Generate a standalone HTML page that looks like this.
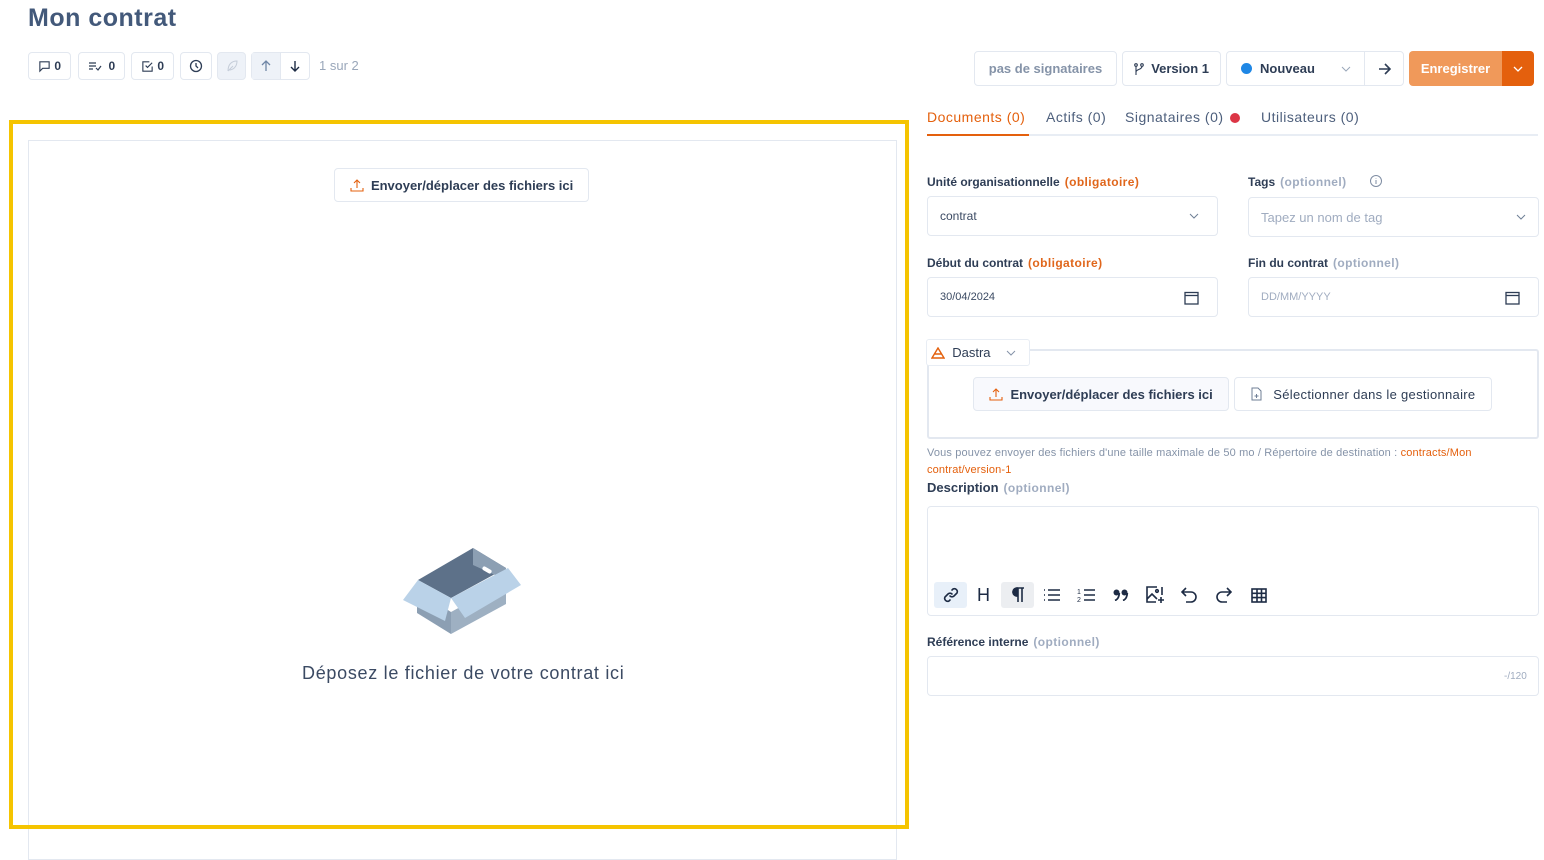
<!DOCTYPE html>
<html><head><meta charset="utf-8"><style>
*{box-sizing:border-box;margin:0;padding:0}
body{width:1544px;height:846px;background:#fff;font-family:"Liberation Sans",sans-serif;color:#3b4a63;position:relative;overflow:hidden}
.a{position:absolute}
.btn{position:absolute;border:1px solid #e3e8f0;border-radius:4px;background:#fff;display:flex;align-items:center;justify-content:center;font-size:12px;font-weight:bold;color:#2e3d55}
.lbl{position:absolute;font-size:12px;font-weight:bold;color:#2e3d55}
.lbl span{font-weight:bold;margin-left:5px;letter-spacing:.4px}
.req{color:#e0661b}.opt{color:#a0acc0}
.inp{position:absolute;border:1px solid #e3e8f0;border-radius:4px;background:#fff;font-size:12px;padding-left:12px;display:flex;align-items:center}
svg{display:block}
.tb{position:absolute;top:582px;width:33px;height:26px;display:flex;align-items:center;justify-content:center}
</style></head><body>
<div class="a" style="left:28px;top:4px;font-size:25px;font-weight:bold;color:#43597a;letter-spacing:.5px">Mon contrat</div>

<div class="btn" style="left:28px;top:52px;width:43px;height:28px"><svg width="13" height="13" viewBox="0 0 14 14" fill="none" stroke="#2e3d55" stroke-width="1.2"><path d="M2 2h10v7H5l-3 3z"/></svg>&nbsp;0</div>
<div class="btn" style="left:78px;top:52px;width:47px;height:28px"><svg width="14" height="12" viewBox="0 0 14 12" fill="none" stroke="#2e3d55" stroke-width="1.2"><path d="M1 3h7M1 6h7M1 9h4M8 8l2 2 3-4"/></svg>&nbsp;&nbsp;0</div>
<div class="btn" style="left:131px;top:52px;width:43px;height:28px"><svg width="13" height="13" viewBox="0 0 14 14" fill="none" stroke="#2e3d55" stroke-width="1.2"><path d="M12 7v5H2V2h7M5 6l2 2 5-5"/></svg>&nbsp;0</div>
<div class="btn" style="left:180px;top:52px;width:32px;height:28px"><svg width="14" height="14" viewBox="0 0 14 14" fill="none" stroke="#2e3d55" stroke-width="1.3"><circle cx="7" cy="7" r="5.5"/><path d="M7 4v3l2 2"/></svg></div>
<div class="btn" style="left:217px;top:52px;width:29px;height:28px;background:#eef2f8"><svg width="14" height="14" viewBox="0 0 14 14" fill="none" stroke="#c5cdd9" stroke-width="1"><path d="M3 12C3 6 6 2 12 2c0 6-4 9-8 9M3 12l5-5"/></svg></div>
<div class="btn" style="left:251px;top:52px;width:59px;height:28px;background:#fff;justify-content:flex-start"><div style="width:29px;height:26px;background:#eef2f8;display:flex;align-items:center;justify-content:center;border-right:1px solid #e3e8f0"><svg width="12" height="12" viewBox="0 0 12 12" fill="none" stroke="#6f86a6" stroke-width="1.3"><path d="M6 11V1M2 5l4-4 4 4"/></svg></div><div style="width:29px;display:flex;justify-content:center"><svg width="12" height="12" viewBox="0 0 12 12" fill="none" stroke="#1d2b44" stroke-width="1.4"><path d="M6 1v10M2 7l4 4 4-4"/></svg></div></div>
<div class="a" style="left:319px;top:58px;font-size:13px;color:#9aa7ba">1 sur 2</div>

<div class="btn" style="left:974px;top:51px;width:143px;height:35px;color:#8593a8;font-size:13px">pas de signataires</div>
<div class="btn" style="left:1122px;top:51px;width:99px;height:35px;font-size:13px"><svg width="10" height="12" viewBox="0 0 10 12" fill="none" stroke="#2e3d55" stroke-width="1.1"><circle cx="2" cy="2" r="1.3"/><circle cx="8" cy="2" r="1.3"/><path d="M2 3.3V12M8 3.3C8 7 2 6 2 9"/></svg>&nbsp;&nbsp;Version 1</div>
<div class="btn" style="left:1226px;top:51px;width:178px;height:35px;justify-content:flex-start;font-size:13px"><div style="width:11px;height:11px;border-radius:50%;background:#1f87e5;margin:0 8px 0 14px"></div>Nouveau<svg class="a" style="left:114px;top:14px" width="10" height="6" viewBox="0 0 10 6" fill="none" stroke="#9aa7ba"><path d="M1 1l4 4 4-4"/></svg><div style="position:absolute;left:137px;top:0;width:1px;height:33px;background:#e3e8f0"></div><svg style="position:absolute;left:151px;top:11px" width="13" height="12" viewBox="0 0 13 12" fill="none" stroke="#2e3d55" stroke-width="1.6"><path d="M1 6h11M7 1l5 5-5 5"/></svg></div>
<div class="a" style="left:1409px;top:51px;width:93px;height:35px;background:#f0995a;border-radius:4px 0 0 4px;color:#fff;font-size:13px;font-weight:bold;display:flex;align-items:center;justify-content:center">Enregistrer</div>
<div class="a" style="left:1502px;top:51px;width:32px;height:35px;background:#e4600d;border-radius:0 4px 4px 0;display:flex;align-items:center;justify-content:center"><svg width="10" height="6" viewBox="0 0 10 6" fill="none" stroke="#fff" stroke-width="1.3"><path d="M1 1l4 4 4-4"/></svg></div>

<div class="a" style="left:927px;top:134px;width:611px;height:2px;background:#e8edf4"></div>
<div class="a" style="left:927px;top:134px;width:102px;height:2px;background:#e4600d"></div>
<div class="a" style="left:927px;top:109px;font-size:14px;color:#e4600d;letter-spacing:.5px">Documents (0)</div>
<div class="a" style="left:1046px;top:109px;font-size:14px;color:#4d5f7c;letter-spacing:.5px">Actifs (0)</div>
<div class="a" style="left:1125px;top:109px;font-size:14px;color:#4d5f7c;letter-spacing:.5px">Signataires (0)</div>
<div class="a" style="left:1230px;top:113px;width:10px;height:10px;border-radius:50%;background:#dc3545"></div>
<div class="a" style="left:1261px;top:109px;font-size:14px;color:#4d5f7c;letter-spacing:.5px">Utilisateurs (0)</div>

<div class="lbl" style="left:927px;top:175px">Unité organisationnelle<span class="req">(obligatoire)</span></div>
<div class="lbl" style="left:1248px;top:175px">Tags<span class="opt">(optionnel)</span></div>
<svg class="a" style="left:1369px;top:174px" width="14" height="14" viewBox="0 0 14 14" fill="none" stroke="#7f8da3"><circle cx="7" cy="7" r="5.5"/><path d="M7 6v4M7 4v.5"/></svg>
<div class="inp" style="left:927px;top:196px;width:291px;height:40px">contrat<svg class="a" style="right:18px;top:16px" width="10" height="6" viewBox="0 0 10 6" fill="none" stroke="#6f7f96"><path d="M1 1l4 4 4-4"/></svg></div>
<div class="inp" style="left:1248px;top:197px;width:291px;height:40px;color:#a0acc0;font-size:13px">Tapez un nom de tag<svg class="a" style="right:12px;top:16px" width="10" height="6" viewBox="0 0 10 6" fill="none" stroke="#6f7f96"><path d="M1 1l4 4 4-4"/></svg></div>

<div class="lbl" style="left:927px;top:256px">Début du contrat<span class="req">(obligatoire)</span></div>
<div class="lbl" style="left:1248px;top:256px">Fin du contrat<span class="opt">(optionnel)</span></div>
<div class="inp" style="left:927px;top:277px;width:291px;height:40px;font-size:11px">30/04/2024<svg class="a" style="right:18px;top:13px" width="15" height="14" viewBox="0 0 15 14" fill="none" stroke="#2e3d55" stroke-width="1.3"><rect x="1" y="1.5" width="13" height="11.5"/><path d="M1 4.5h13"/></svg></div>
<div class="inp" style="left:1248px;top:277px;width:291px;height:40px;font-size:11px;color:#a0acc0">DD/MM/YYYY<svg class="a" style="right:18px;top:13px" width="15" height="14" viewBox="0 0 15 14" fill="none" stroke="#2e3d55" stroke-width="1.3"><rect x="1" y="1.5" width="13" height="11.5"/><path d="M1 4.5h13"/></svg></div>

<div class="a" style="left:927px;top:349px;width:612px;height:90px;border:2px solid #e3e8f0;border-radius:3px"></div>
<div class="a" style="left:926px;top:339px;width:104px;height:27px;background:#fff;border:1px solid #e8edf4;border-radius:3px;font-size:13px;color:#2e3d55;display:flex;align-items:center;padding-left:4px"><svg width="14" height="12" viewBox="0 0 14 12" fill="none" stroke="#e4600d" stroke-width="1.4"><path d="M7 1L1 11h12zM3.5 7h7"/></svg>&nbsp;&nbsp;Dastra<svg style="margin-left:15px" width="10" height="6" viewBox="0 0 10 6" fill="none" stroke="#8593a8"><path d="M1 1l4 4 4-4"/></svg></div>
<div class="btn" style="left:973px;top:377px;width:256px;height:34px;background:#f8f9fd;font-size:13px"><svg width="14" height="13" viewBox="0 0 14 13" fill="none" stroke="#e4600d" stroke-width="1.1"><path d="M7 9V1M4 4l3-3 3 3M1 9v3h12V9"/></svg>&nbsp;&nbsp;Envoyer/déplacer des fichiers ici</div>
<div class="btn" style="left:1234px;top:377px;width:258px;height:34px;font-size:13px;font-weight:normal;letter-spacing:.3px"><svg width="11" height="14" viewBox="0 0 11 14" fill="none" stroke="#6f7f96"><path d="M1 1h6l3 3v9H1zM5.5 7v4M3.5 9h4"/></svg>&nbsp;&nbsp;&nbsp;Sélectionner dans le gestionnaire</div>
<div class="a" style="left:927px;top:445px;width:600px;font-size:11px;line-height:17px;color:#8593a8;letter-spacing:.15px">Vous pouvez envoyer des fichiers d'une taille maximale de 50 mo / Répertoire de destination : <span style="color:#e4600d">contracts/Mon contrat/version-1</span></div>
<div class="lbl" style="left:927px;top:480px;font-size:13px">Description<span class="opt" style="font-size:12px">(optionnel)</span></div>
<div class="a" style="left:927px;top:506px;width:612px;height:110px;border:1px solid #e3e8f0;border-radius:4px"></div>
<div class="a" style="left:934px;top:582px;width:33px;height:26px;background:#e8f0f9;border-radius:3px"></div>
<div class="a" style="left:1001px;top:582px;width:33px;height:26px;background:#eceef1;border-radius:3px"></div>
<g></g>
<div class="tb" style="left:934px"><svg width="18" height="18" viewBox="0 0 18 18" fill="none" stroke="#1d2b44" stroke-width="1.6" stroke-linecap="round"><path d="M8 10a3 3 0 0 0 4 0l3-3a3 3 0 0 0-4-4l-1 1M10 8a3 3 0 0 0-4 0l-3 3a3 3 0 0 0 4 4l1-1"/></svg></div>
<div class="tb" style="left:967px;font-size:18px;color:#1d2b44">H</div>
<div class="tb" style="left:1001px"><svg width="14" height="16" viewBox="0 0 14 16" fill="none" stroke="#1d2b44" stroke-width="1.6"><path d="M6 9a4 4 0 0 1 0-8h7M7 1v14M11 1v14"/><path d="M6 1a4 4 0 0 0 0 8z" fill="#1d2b44"/></svg></div>
<div class="tb" style="left:1035px"><svg width="17" height="14" viewBox="0 0 17 14" fill="none" stroke="#1d2b44" stroke-width="1.6"><path d="M5 2h12M5 7h12M5 12h12M1 2h1M1 7h1M1 12h1"/></svg></div>
<div class="tb" style="left:1069px"><svg width="18" height="16" viewBox="0 0 18 16" fill="none" stroke="#1d2b44" stroke-width="1.6"><path d="M7 3h11M7 8h11M7 13h11"/><text x="0" y="7" font-size="7" fill="#1d2b44" stroke="none" font-family="Liberation Sans">1</text><text x="0" y="15" font-size="7" fill="#1d2b44" stroke="none" font-family="Liberation Sans">2</text></svg></div>
<div class="tb" style="left:1104px"><svg width="16" height="12" viewBox="0 0 16 12"><circle cx="3.5" cy="3.5" r="3" fill="#1d2b44"/><circle cx="11.5" cy="3.5" r="3" fill="#1d2b44"/><path d="M6.3 4Q6 10 2 11.5M14.3 4Q14 10 10 11.5" fill="none" stroke="#1d2b44" stroke-width="1.8"/></svg></div>
<div class="tb" style="left:1139px"><svg width="19" height="18" viewBox="0 0 19 18" fill="none" stroke="#1d2b44" stroke-width="1.6"><path d="M11 1H1v15h9M16 1v8"/><path d="M1 13l5-5 5 5"/><circle cx="11" cy="5" r="1.3"/><path d="M15 11v6M12 14h6"/></svg></div>
<div class="tb" style="left:1173px"><svg width="17" height="16" viewBox="0 0 17 16" fill="none" stroke="#1d2b44" stroke-width="1.6"><path d="M5 1L1 5l4 4M1 5h9a5 5 0 0 1 0 10H5"/></svg></div>
<div class="tb" style="left:1207px"><svg width="17" height="16" viewBox="0 0 17 16" fill="none" stroke="#1d2b44" stroke-width="1.6"><path d="M12 1l4 4-4 4M16 5H7a5 5 0 0 0 0 10h5"/></svg></div>
<div class="tb" style="left:1242px"><svg width="16" height="15" viewBox="0 0 16 15" fill="none" stroke="#1d2b44" stroke-width="1.6"><rect x="1" y="1" width="14" height="13"/><path d="M1 5.3h14M1 9.6h14M6 1v13M10.5 1v13"/></svg></div>

<div class="lbl" style="left:927px;top:635px">Référence interne<span class="opt">(optionnel)</span></div>
<div class="a" style="left:927px;top:656px;width:612px;height:40px;border:1px solid #e3e8f0;border-radius:4px"></div>
<div class="a" style="left:1504px;top:671px;font-size:10px;color:#a0acc0">-/120</div>

<div class="a" style="left:28px;top:140px;width:869px;height:720px;border:1px solid #e3e8f0"></div>
<div class="a" style="left:9px;top:120px;width:900px;height:709px;border:4px solid #f5c400"></div>
<div class="btn" style="left:334px;top:168px;width:255px;height:34px;font-size:13px"><svg width="14" height="13" viewBox="0 0 14 13" fill="none" stroke="#e4600d" stroke-width="1.1"><path d="M7 9V1M4 4l3-3 3 3M1 9v3h12V9"/></svg>&nbsp;&nbsp;Envoyer/déplacer des fichiers ici</div>
<svg class="a" style="left:400px;top:545px" width="125" height="92" viewBox="400 545 125 92">
<polygon points="418,580 473,548 506,568 451,598" fill="#5d7189"/>
<polygon points="473,548 506,568 506,580 473,565" fill="#8c9fb3"/>
<polygon points="417,590 451,612 451,634 417,613" fill="#8c9fb3"/>
<polygon points="451,612 506,582 506,604 451,634" fill="#9eb0c2"/>
<polygon points="403,600 418,580 451,598 445,621" fill="#bad2e8"/>
<polygon points="451,598 508,568 521,585 465,618" fill="#bad2e8"/>
<rect x="482" y="568" width="10" height="4" rx="2" fill="#fff" transform="rotate(30 487 570)"/>
</svg>
<div class="a" style="left:302px;top:663px;font-size:18px;color:#3b4a63;letter-spacing:.7px">Déposez le fichier de votre contrat ici</div>
</body></html>
